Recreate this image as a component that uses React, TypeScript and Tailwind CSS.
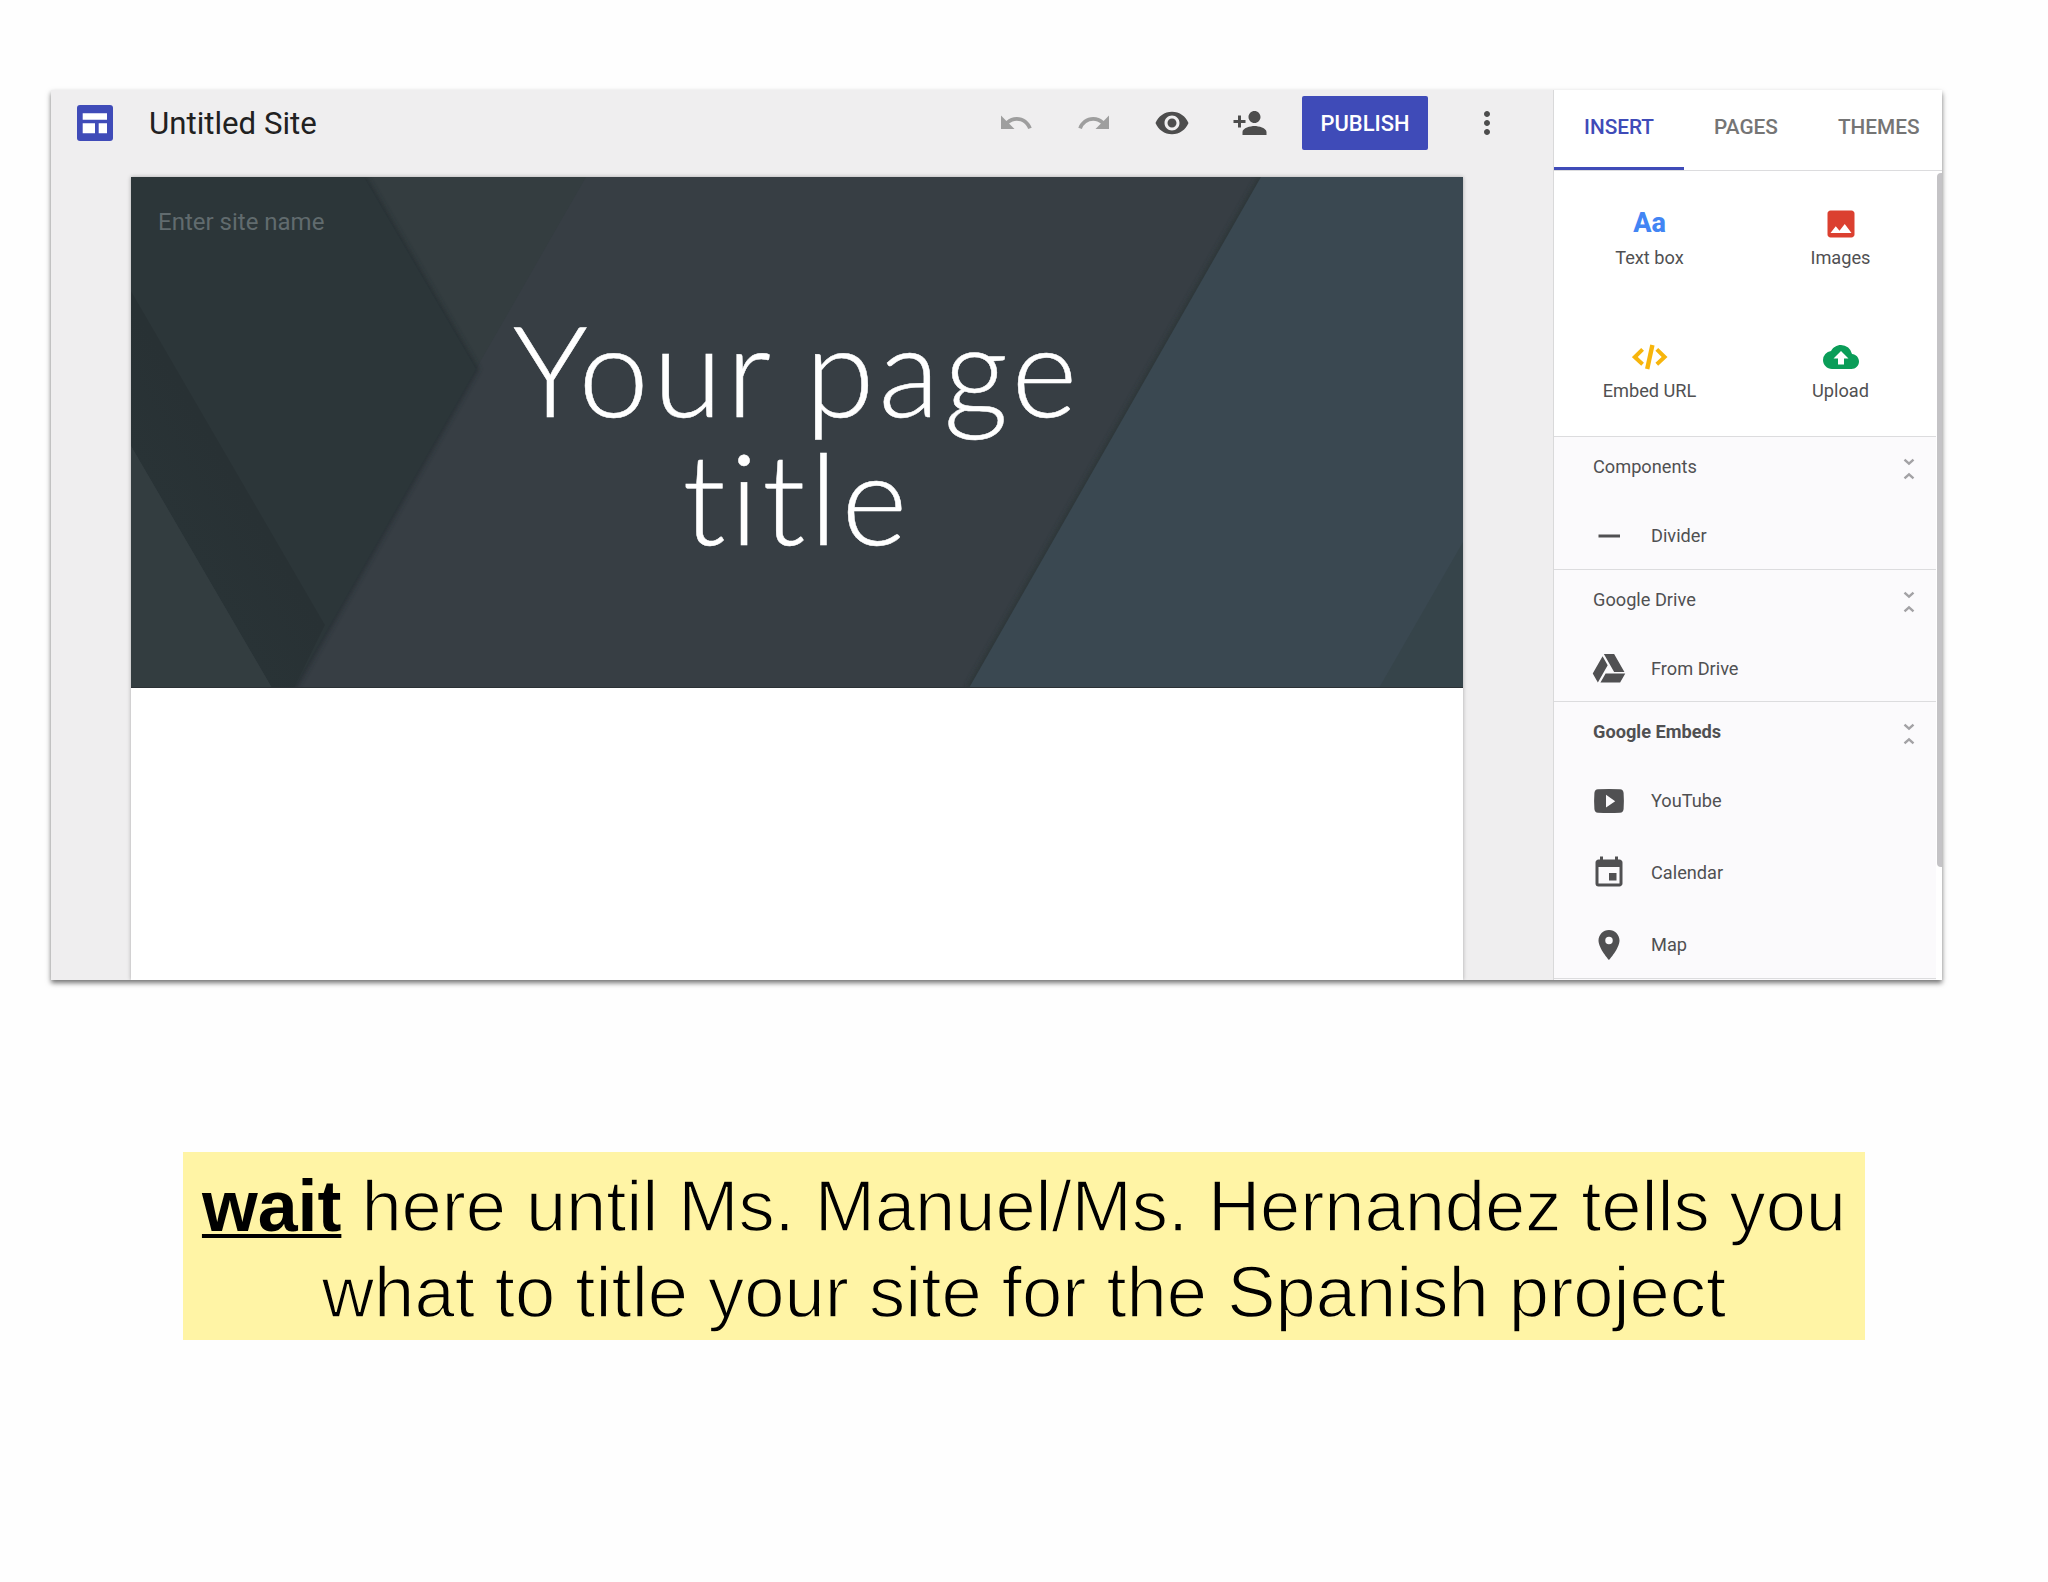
import { ReactNode, useState } from "react";
import { MdBackup, MdEvent, MdImage, MdMoreVert, MdPersonAdd, MdPlace, MdRedo, MdUndo, MdVisibility } from "react-icons/md";
import clsx from "clsx";

type Item = { label: string; icon: ReactNode };
type Section = { title: string; bold?: boolean; items: Item[] };

const SitesLogo = () => (
  <svg className="h-9 w-9" viewBox="0 0 36 36">
    <rect width="36" height="36" rx="3" fill="#3f4bb8" />
    <path fill="#fff" d="M5.7 8.3H30v6.4H5.7zM5.7 18.3H18v10H5.7zM21.7 18.3H30v10h-8.3z" />
  </svg>
)

const CodeIcon = () => (
  <svg className="h-9 w-9" viewBox="0 0 36 36" fill="none" stroke="#f7b50c" strokeWidth="4">
    <path d="M10.6 10.4 2.8 18l7.800 7.200M24.800 10.400 32.600 18l-7.800 7.200" />
    <path d="M20.400 6 15.200 30" strokeWidth="4.400" />
  </svg>
)

const DividerIcon = () => (
  <svg className="h-9 w-9" viewBox="0 0 36 36">
    <path fill="currentColor" d="M7.5 16.5H29v3H7.5z" />
  </svg>
)

const DriveIcon = () => (
  <svg className="h-9 w-9" viewBox="0 0 24 24" fill="currentColor">
    <path d="M7.71 3.5 1.15 15l3.43 6 6.55-11.5zM9.73 15 6.3 21h13.12l3.43-6zM22.28 14 15.42 2H8.58l6.85 12z" />
  </svg>
)

const YoutubeIcon = () => (
  <svg className="h-9 w-9" viewBox="0 0 36 36">
    <path
      fill="currentColor"
      fillRule="evenodd"
      d="M7 6.2Q18 5.6 29 6.2q3.3.3 3.6 3.8.6 8 0 16-.3 3.500-3.600 3.800-11 .6-22 0Q3.700 29.500 3.400 26q-.6-8 0-16Q3.700 6.500 7 6.200zM15 11.800v12.800l9.200-6.400z"
    />
  </svg>
)

const CollapseIcon = () => (
  <svg className="h-6 w-3" viewBox="0 0 12 24" fill="none" stroke="#a3a2a5" strokeWidth="2.4">
    <path d="M1.500 2.600 6 6.700l4.500-4.100M1.500 21.400 6 17.300l4.500 4.100" />
  </svg>
)

const tabs = ['INSERT', 'PAGES', 'THEMES']

const inserts: Item[] = [
  { label: 'Text box', icon: <span className="-mt-px mb-px text-[27px] font-extrabold leading-9 text-[#4285f4]">Aa</span> },
  { label: 'Images', icon: <MdImage className="h-9 w-9 text-[#db4030]" /> },
  { label: 'Embed URL', icon: <CodeIcon /> },
  { label: 'Upload', icon: <MdBackup className="h-9 w-9 text-[#0a9d58]" /> },
]

const sections: Section[] = [
  { title: 'Components', items: [{ label: 'Divider', icon: <DividerIcon /> }] },
  { title: 'Google Drive', items: [{ label: 'From Drive', icon: <DriveIcon /> }] },
  {
    title: 'Google Embeds',
    bold: true,
    items: [
      { label: 'YouTube', icon: <YoutubeIcon /> },
      { label: 'Calendar', icon: <MdEvent className="h-9 w-9" /> },
      { label: 'Map', icon: <MdPlace className="h-9 w-9" /> },
    ],
  },
]

const Toolbar = () => (
  <header className="mb-[21px] flex h-[66px] items-center pl-[26px] pr-12">
    <SitesLogo />
    <h1 className="ml-9 flex-1 pt-px text-[31.2px] leading-9 text-[#212121]">Untitled Site</h1>
    <div className="flex gap-[42px] text-[#4d4d4d]">
      <MdUndo className="h-9 w-9 text-[#9e9e9e]" />
      <MdRedo className="h-9 w-9 text-[#9e9e9e]" />
      <MdVisibility className="h-9 w-9" />
      <MdPersonAdd className="h-9 w-9" />
    </div>
    <button className="ml-[34px] h-[54px] w-[126px] rounded-[2px] bg-[#3f4bb8] pt-0.5 text-[21.900px] font-medium text-white">PUBLISH</button>
    <MdMoreVert className="ml-[41px] h-9 w-9 text-[#4d4d4d]" />
  </header>
)

// folded paper pattern behind the page title
const HeroPattern = () => (
  <svg className="absolute inset-0 h-full w-full" viewBox="0 0 1332 511" preserveAspectRatio="none">
    <defs>
      <linearGradient id="fold" gradientUnits="userSpaceOnUse" x1="70" y1="391" x2="135" y2="353">
        <stop offset="0" stopColor="#293336" />
        <stop offset="1" stopColor="#283134" />
      </linearGradient>
      <filter id="soft"><feGaussianBlur stdDeviation="2" /></filter>
    </defs>
    <rect width="1332" height="511" fill="#373e44" />
    <path d="M233 0h222L345 192z" fill="#343d40" />
    <path d="M233 0 345 192 163 511" fill="none" stroke="#232b2e" strokeWidth="6" opacity=".6" filter="url(#soft)" />
    <path d="M0 0h233l112 192-182 319h-22L0 269z" fill="#2c3639" />
    <path d="M0 114 194 448l-31 63h-22L0 269z" fill="url(#fold)" />
    <path d="M0 269 141 511H0z" fill="#333d40" />
    <path d="M1130 0 838 511" fill="none" stroke="#2c3436" strokeWidth="6" opacity=".7" filter="url(#soft)" />
    <path d="M1130 0h202v511H838z" fill="#3a4851" />
    <path d="M1332 365v146h-84z" fill="#36444a" />
    <path d="M0 510.500h1332" stroke="#2b3135" />
  </svg>
)

const PageCanvas = () => (
  <main className="mx-20 h-[803px] w-[1332px] bg-white shadow-[0_0_4px_rgba(0,0,0,0.3)]">
    <section className="relative h-[511px]">
      <HeroPattern />
      <div className="relative pt-[31px]">
        <p className="pl-[27px] text-[24px] leading-7 text-[#616b6e]">Enter site name</p>
        <h2 className="mt-[69px] text-center font-['Lato',sans-serif] text-[126px] font-light leading-[128px] tracking-[4.2px] text-white [word-spacing:-6px] [-webkit-text-stroke:0.5px_#fff]">
          Your page<br />title
        </h2>
      </div>
    </section>
  </main>
)

const InsertPanel = () => {
  const [activeTab, setActiveTab] = useState('INSERT')

  return (
    <aside className="flex w-[389px] flex-col border-l border-[#d9d9da] bg-white">
      <nav className="flex h-[81px] border-b border-[#dcdcde]">
        {tabs.map((tab) => (
          <button
            key={tab}
            onClick={() => setActiveTab(tab)}
            className={clsx(
              'h-20 border-b-[3px] px-[30px] pb-[2px] text-[20.8px] font-medium',
              tab === activeTab ? 'border-[#3f4bb8] text-[#3f4bb8]' : 'border-transparent text-[#757575]'
            )}
          >
            {tab}
          </button>
        ))}
      </nav>
      <div className="flex flex-1 justify-between">
        <div className="w-[382px] bg-[#fbfafc] text-[18.2px] text-[#505052]">
          <div className="grid h-[265px] grid-cols-2 bg-white">
            {inserts.map(({ label, icon }) => (
              <div key={label} className="flex flex-col items-center pt-[35px]">
                {icon}
                <span className="mt-1.5 leading-5">{label}</span>
              </div>
            ))}
          </div>
          {sections.map(({ title, bold, items }) => (
            <section key={title} className="border-t border-[#dcdcde] last:border-b">
              <div className={clsx('mb-[7px] flex h-[60px] items-center justify-between pl-[39px] pr-[21px]', bold && 'font-bold')}>
                {title}
                <span className="pt-1"><CollapseIcon /></span>
              </div>
              <ul className="flex flex-col gap-2 pb-[0.5px]">
                {items.map(({ label, icon }) => (
                  <li key={label} className="flex h-16 items-center gap-6 pl-[37px]">
                    {icon}
                    {label}
                  </li>
                ))}
              </ul>
            </section>
          ))}
        </div>
        <div className="mt-0.5 h-[694px] w-[5px] rounded-l-[4px] bg-[#c4c3c6]" />
      </div>
    </aside>
  )
}

const Instruction = () => (
  <div className="ml-[132px] mt-[172px] flex h-[188px] w-[1682px] flex-col items-center bg-[#fff4a5] pt-[11px] font-['Liberation_Sans',Arial,sans-serif] text-[72.4px] leading-[85px] text-black">
    <p className="whitespace-nowrap">
      <b className="text-[71.700px] underline decoration-[4px] underline-offset-[3px]">wait</b>
      <span className="tracking-[-0.09px] [-webkit-text-stroke:1.5px_#fff4a5]"> here until Ms. Manuel/Ms. Hernandez tells you</span>
    </p>
    <p className="whitespace-nowrap [-webkit-text-stroke:1.5px_#fff4a5]">what to title your site for the Spanish project</p>
  </div>
)

export default function App() {
  return (
    <div className="h-[1582px] w-[2048px] overflow-hidden bg-[#fefefe] pl-[51px] pt-[90px] font-['Roboto',sans-serif]">
      <div className="flex h-[890px] w-[1891px] overflow-hidden bg-[#efeeef] shadow-[0_3px_5px_rgba(0,0,0,0.55)]">
        <div className="w-[1502px]">
          <Toolbar />
          <PageCanvas />
        </div>
        <InsertPanel />
      </div>
      <Instruction />
    </div>
  )
}
